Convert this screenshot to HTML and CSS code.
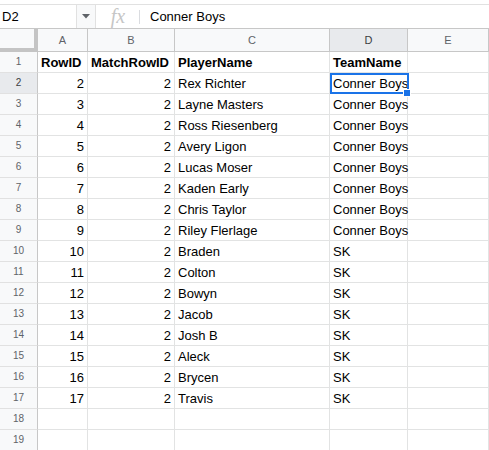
FILE: index.html
```html
<!DOCTYPE html>
<html>
<head>
<meta charset="utf-8">
<link rel="stylesheet" href="styles.css">
</head>
<body>
<div class="topbar">
  <div class="namebox">D2</div>
  <div class="drop"><svg width="8" height="5" viewBox="0 0 8 5"><path d="M0 0h8L4 4.5z" fill="#5f6368"/></svg></div>
  <div class="fx">fx</div>
  <div class="sep"></div>
  <div class="formula">Conner Boys</div>
</div>
<div class="wrap">
<div class="sheet" id="sheet">
  <div class="corner"></div>
  <div class="ch">A</div><div class="ch">B</div><div class="ch">C</div><div class="ch sel">D</div><div class="ch">E</div>
</div>
<div class="selbox"><div class="handle"></div></div>
</div>
<script>
const rows=[["RowID","MatchRowID","PlayerName","TeamName"],
[2,2,"Rex Richter","Conner Boys"],[3,2,"Layne Masters","Conner Boys"],[4,2,"Ross Riesenberg","Conner Boys"],
[5,2,"Avery Ligon","Conner Boys"],[6,2,"Lucas Moser","Conner Boys"],[7,2,"Kaden Early","Conner Boys"],
[8,2,"Chris Taylor","Conner Boys"],[9,2,"Riley Flerlage","Conner Boys"],[10,2,"Braden","SK"],[11,2,"Colton","SK"],
[12,2,"Bowyn","SK"],[13,2,"Jacob","SK"],[14,2,"Josh B","SK"],[15,2,"Aleck","SK"],[16,2,"Brycen","SK"],[17,2,"Travis","SK"],
null,null];
const s=document.getElementById('sheet');
rows.forEach((r,i)=>{
  const rh=document.createElement('div');rh.className='rh'+(i==1?' sel':'');rh.textContent=i+1;s.appendChild(rh);
  for(let c=0;c<5;c++){
    const d=document.createElement('div');d.className='cell';
    if(r&&c<4){const v=r[c];d.textContent=v;
      if(i==0)d.classList.add('bold');
      else if(typeof v==='number')d.classList.add('num');
      if(c==3)d.classList.add('ovf');}
    s.appendChild(d);
  }
});
</script>
</body>
</html>
```
FILE: styles.css
```css
html,body{margin:0;padding:0;background:#fff;}
body{font-family:"Liberation Sans",Arial,sans-serif;width:489px;height:450px;overflow:hidden;}
.topbar{margin-top:4px;border-top:1px solid #e1e1e1;border-bottom:1px solid #c7c7c7;height:23px;display:flex;align-items:center;}
.namebox{padding-left:2px;font-size:13px;color:#000;height:23px;line-height:23px;border-right:1px solid #e1e1e1;box-sizing:border-box;width:77px;}
.drop{width:19px;height:23px;display:flex;align-items:center;justify-content:center;border-right:1px solid #e1e1e1;box-sizing:border-box;background:#f8f9fa;}
.fx{width:43px;text-align:center;font-family:"Liberation Serif",serif;font-style:italic;font-size:20px;color:#c6c6c6;line-height:23px;padding-left:1px;box-sizing:border-box;}
.sep{width:1px;height:14px;background:#dadce0;}
.formula{padding-left:10px;font-size:13px;color:#000;}
.wrap{position:relative;}
.sheet{display:grid;grid-template-columns:38px 50px 87px 155px 78px 81px;grid-template-rows:23px;grid-auto-rows:21px;}
.corner{box-sizing:border-box;background:#f8f9fa;border-right:4px solid #c4c4c4;border-bottom:4px solid #c4c4c4;}
.ch{box-sizing:border-box;background:#f8f9fa;border-right:1px solid #c7c7c7;border-bottom:1px solid #c7c7c7;font-size:11px;color:#5f6368;text-align:center;line-height:22px;}
.ch.sel{background:#e8eaed;color:#3c4043;}
.rh{box-sizing:border-box;background:#f8f9fa;border-right:1px solid #c7c7c7;border-bottom:1px solid #e1e1e1;font-size:10px;color:#5f6368;text-align:center;line-height:20px;}
.rh.sel{background:#e8eaed;color:#3c4043;}
.cell{box-sizing:border-box;border-right:1px solid #e2e3e3;border-bottom:1px solid #e2e3e3;font-size:13px;color:#000;line-height:21px;padding:0 3px;white-space:nowrap;}
.cell.num{text-align:right;}
.cell.bold{font-weight:bold;}
.cell.ovf{overflow:visible;}
.selbox{position:absolute;left:330px;top:44px;width:79px;height:21px;box-sizing:border-box;border:2px solid #1a73e8;}
.handle{position:absolute;right:-4px;bottom:-5px;width:6px;height:6px;background:#1a73e8;border:1px solid #fff;}
```
